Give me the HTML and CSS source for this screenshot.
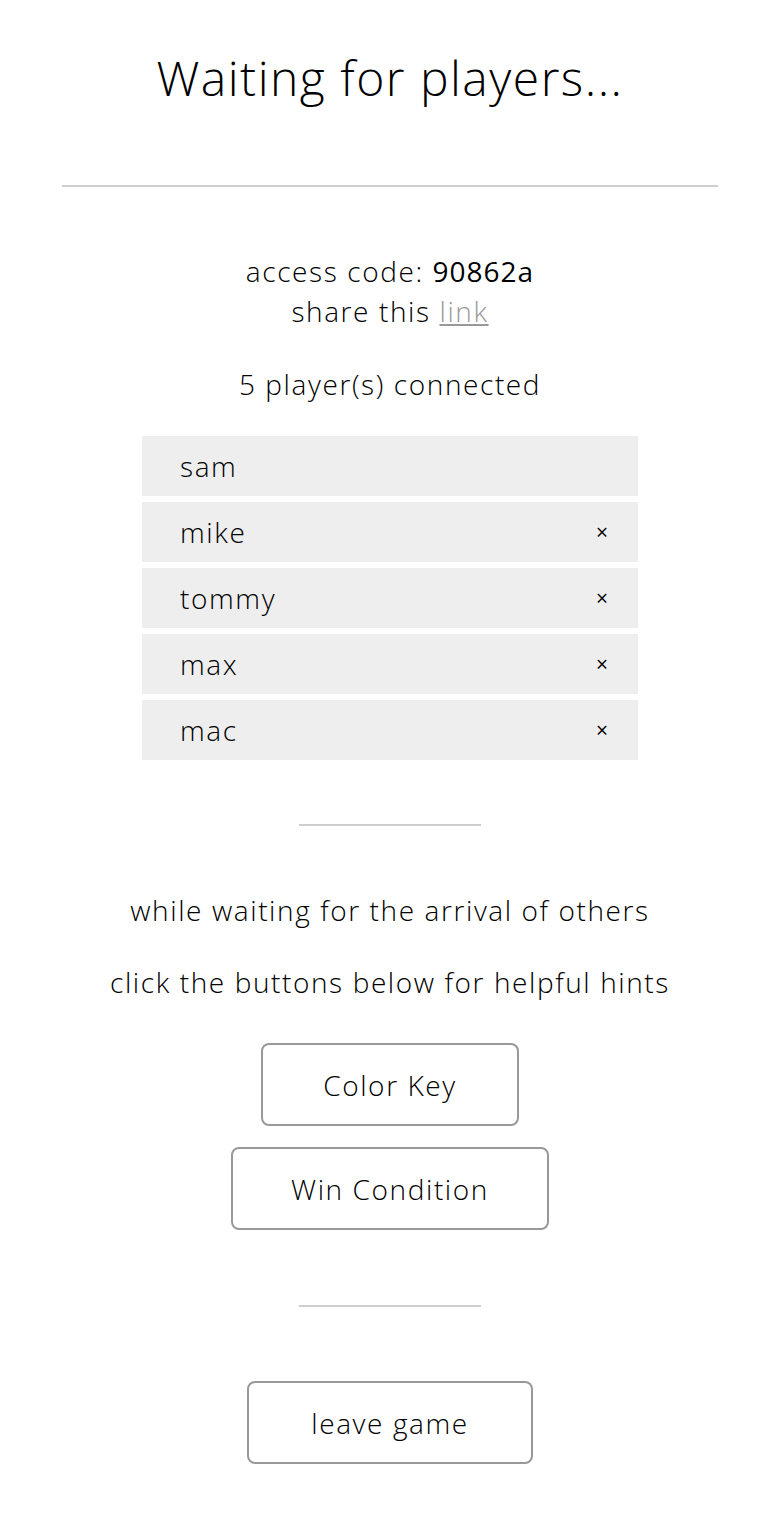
FILE: index.html
```html
<!DOCTYPE html>
<html>
<head>
<meta charset="utf-8">
<link rel="stylesheet" href="styles.css">
</head>
<body>
<main class="page">
  <h1 class="title">Waiting for players...</h1>
  <hr class="rule-wide">
  <div class="access">
    <div>access code: <span class="code">90862a</span></div>
    <div>share this <a class="link" href="#">link</a></div>
  </div>
  <div class="count">5 player(s) connected</div>
  <ul class="players">
    <li class="player"><span>sam</span></li>
    <li class="player"><span>mike</span><span class="kick">×</span></li>
    <li class="player"><span>tommy</span><span class="kick">×</span></li>
    <li class="player"><span>max</span><span class="kick">×</span></li>
    <li class="player"><span>mac</span><span class="kick">×</span></li>
  </ul>
  <hr class="rule-short">
  <p class="hint hint-1">while waiting for the arrival of others</p>
  <p class="hint hint-2">click the buttons below for helpful hints</p>
  <div class="hint-buttons">
    <button class="btn btn-color">Color Key</button>
    <button class="btn btn-win">Win Condition</button>
  </div>
  <hr class="rule-short rule-bottom">
  <button class="btn btn-leave">leave game</button>
</main>
</body>
</html>
```
FILE: styles.css
```css
* { box-sizing: border-box; }
html, body { margin: 0; padding: 0; background: #fff; }
body {
  font-family: "Open Sans", "Lato", sans-serif;
  font-weight: 300;
  color: #000;
  letter-spacing: 1.6px;
}
.page {
  display: flex;
  flex-direction: column;
  align-items: center;
  padding-top: 48px;
}
.title {
  margin: 0;
  font-size: 48px;
  font-weight: 300;
  line-height: 60px;
  letter-spacing: 1.5px;
}
.rule-wide {
  width: 656px;
  margin: 77px 0 0;
  border: 0;
  border-top: 2px solid #cfcfcf;
  height: 0;
}
.access {
  margin-top: 64px;
  font-size: 28px;
  line-height: 40px;
  text-align: center;
}
.code { font-weight: 400; letter-spacing: 1px; }
.link { color: #999; text-decoration: underline; }
.count {
  margin-top: 33px;
  font-size: 28px;
  line-height: 40px;
}
.players {
  list-style: none;
  margin: 32px 0 0;
  padding: 0;
  width: 496px;
  display: flex;
  flex-direction: column;
  gap: 6px;
}
.player {
  height: 60px;
  background: #eeeeee;
  display: flex;
  align-items: center;
  justify-content: space-between;
  padding: 0 30px 0 38px;
  font-size: 28px;
}
.kick {
  font-size: 21px;
  font-weight: 400;
  letter-spacing: 0;
}
.rule-short {
  width: 182px;
  margin: 64px 0 0;
  border: 0;
  border-top: 2px solid #cfcfcf;
  height: 0;
}
.hint {
  margin: 0;
  font-size: 28px;
  line-height: 40px;
}
.hint-1 { margin-top: 64px; }
.hint-2 { margin-top: 32px; }
.hint-buttons {
  margin-top: 41px;
  display: flex;
  flex-direction: column;
  align-items: center;
  gap: 21px;
}
.btn {
  font-family: inherit;
  font-weight: 300;
  font-size: 28px;
  letter-spacing: 1.6px;
  color: #000;
  background: #fff;
  border: 2px solid #999;
  border-radius: 8px;
  height: 83px;
  cursor: pointer;
}
.btn-color { width: 258px; }
.btn-win { width: 318px; }
.rule-bottom { margin-top: 75px; }
.btn-leave { width: 286px; margin-top: 74px; }
```
